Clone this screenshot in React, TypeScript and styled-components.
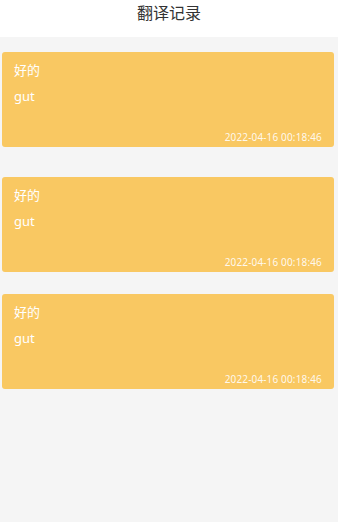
import React from "react";
import styled, { createGlobalStyle } from "styled-components";

const Global = createGlobalStyle`
  html, body { margin: 0; padding: 0; background: #f5f5f5; }
  body { font-family: "Noto Sans", "Noto Sans CJK SC", sans-serif; }
`;

const Page = styled.div`
  width: 338px;
  min-height: 522px;
  background: #f5f5f5;
  display: flex;
  flex-direction: column;
`;

const Header = styled.header`
  height: 37px;
  background: #ffffff;
  display: flex;
  justify-content: center;
  align-items: flex-start;
`;

const Title = styled.h1`
  margin: 0;
  padding-top: 1px;
  font-size: 16px;
  line-height: 23px;
  font-weight: 400;
  color: #333333;
  font-family: "Noto Sans CJK SC", sans-serif;
`;

const List = styled.div`
  display: flex;
  flex-direction: column;
  padding: 0 4px 0 2px;
`;

const Card = styled.div<{ $top: number }>`
  margin-top: ${(p) => p.$top}px;
  height: 95px;
  box-sizing: border-box;
  background: #f9c862;
  border-radius: 3px;
  padding: 9px 12px 3px 12px;
  display: flex;
  flex-direction: column;
  color: #ffffff;
`;

const Source = styled.div`
  font-size: 13px;
  line-height: 18px;
  font-family: "Noto Sans CJK SC", sans-serif;
`;

const Target = styled.div`
  margin-top: 8px;
  font-size: 13px;
  line-height: 18px;
`;

const Time = styled.div`
  margin-top: auto;
  align-self: flex-end;
  font-size: 10px;
  line-height: 14px;
  letter-spacing: 0.15px;
  color: rgba(255, 255, 255, 0.9);
`;

const records = [
  { src: "好的", dst: "gut", time: "2022-04-16 00:18:46", top: 15 },
  { src: "好的", dst: "gut", time: "2022-04-16 00:18:46", top: 30 },
  { src: "好的", dst: "gut", time: "2022-04-16 00:18:46", top: 22 },
];

export default function App() {
  return (
    <Page>
      <Global />
      <Header>
        <Title>翻译记录</Title>
      </Header>
      <List>
        {records.map((r, i) => (
          <Card key={i} $top={r.top}>
            <Source>{r.src}</Source>
            <Target>{r.dst}</Target>
            <Time>{r.time}</Time>
          </Card>
        ))}
      </List>
    </Page>
  );
}
